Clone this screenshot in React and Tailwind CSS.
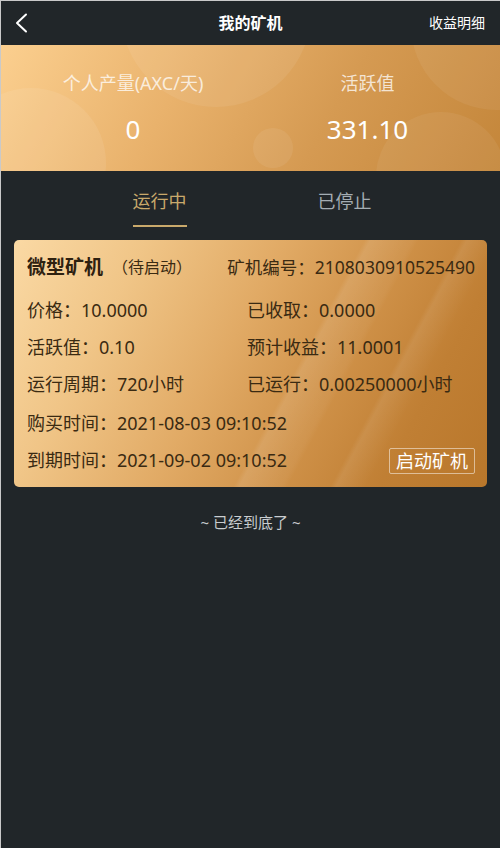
import React from "react";

const font = { fontFamily: '"Noto Sans", "Noto Sans CJK SC", sans-serif' };

function Row({ label, value }) {
  return (
    <div className="flex items-center whitespace-nowrap">
      <span>{label}：</span>
      <span>{value}</span>
    </div>
  );
}

export default function App() {
  return (
    <div
      className="w-[500px] h-[848px] bg-[#212629] border-t border-l border-[#c9c9c9] overflow-hidden flex flex-col"
      style={font}
    >
      {/* Header */}
      <div className="h-[44px] shrink-0 flex items-center justify-between px-[14px] relative">
        <svg width="14" height="20" viewBox="0 0 14 20" className="mt-[-1px]">
          <polyline points="11,1.5 2,10 11,18.5" fill="none" stroke="#ffffff" strokeWidth="2" strokeLinecap="round" strokeLinejoin="round" />
        </svg>
        <div className="absolute left-0 right-0 text-center text-white font-bold text-[16px] pointer-events-none mt-[-1px]">
          我的矿机
        </div>
        <div className="text-white text-[14px] mr-[1px] mt-[-2px]">收益明细</div>
      </div>

      {/* Banner */}
      <div className="relative h-[126px] shrink-0 overflow-hidden bg-[linear-gradient(120deg,#fbcf8f_0%,#e9b26c_35%,#d59a52_65%,#c4863a_100%)]">
        <svg className="absolute inset-0" width="500" height="126" viewBox="0 0 500 126">
          <circle cx="215" cy="-33" r="95" fill="#ffffff" fillOpacity="0.07" />
          <circle cx="30" cy="118" r="75" fill="#ffffff" fillOpacity="0.08" />
          <circle cx="272" cy="103" r="20" fill="#ffffff" fillOpacity="0.07" />
          <circle cx="495" cy="-20" r="85" fill="#ffffff" fillOpacity="0.06" />
          <circle cx="440" cy="132" r="65" fill="#ffffff" fillOpacity="0.06" />
        </svg>
        <div className="relative grid grid-cols-[264px_1fr] h-full">
          <div className="flex flex-col items-center">
            <div className="mt-[26px] text-[18px] text-white/75 leading-[24px]">个人产量(AXC/天)</div>
            <div className="mt-[16px] text-[26px] text-white leading-[36px]">0</div>
          </div>
          <div className="flex flex-col items-center pr-[30px]">
            <div className="mt-[26px] text-[18px] text-white/75 leading-[24px]">活跃值</div>
            <div className="mt-[16px] text-[26px] text-white leading-[36px]">331.10</div>
          </div>
        </div>
      </div>

      {/* Tabs */}
      <div className="w-[370px] ml-[66px] grid grid-cols-2 h-[57px] shrink-0">
        <div className="flex flex-col items-center justify-end">
          <div className="text-[18px] text-[#c9a96b] leading-[24px]">运行中</div>
          <div className="mt-[12px] mb-[1px] w-[54px] h-[2px] bg-[#c9a96b]" />
        </div>
        <div className="flex flex-col items-center justify-end">
          <div className="text-[18px] text-[#a4adb3] leading-[24px]">已停止</div>
          <div className="mt-[12px] mb-[1px] h-[2px]" />
        </div>
      </div>

      {/* Card */}
      <div className="mx-[13px] mt-[12px] rounded-[5px] overflow-hidden relative bg-[linear-gradient(118deg,#fad9a4_0%,#f0c587_22%,#e1aa65_45%,#cf9148_65%,#c07f34_82%,#b9772b_100%)] text-[#3a2a12] text-[18px]">
        <div className="absolute inset-0 bg-[linear-gradient(118deg,transparent_0%,transparent_58%,rgba(255,255,255,0.10)_59%,rgba(255,255,255,0.04)_66%,transparent_67%,transparent_74%,rgba(255,255,255,0.08)_75%,transparent_80%,transparent_100%)]" />
        <div className="relative pt-[12px] pb-[8px] pl-[13px] pr-[13px]">
          <div className="h-[30px] flex items-center justify-between whitespace-nowrap">
            <div className="flex items-center">
              <span className="text-[19px] font-bold text-[#2e2110]">微型矿机</span>
              <span className="ml-[9px] text-[16px] text-[#3a2a12]">（待启动）</span>
            </div>
            <div className="text-[17.5px] mr-[-1px]">矿机编号：2108030910525490</div>
          </div>
          <div className="mt-[10px] grid grid-cols-[220px_1fr] grid-rows-[37px_37px_37px]">
            <Row label="价格" value="10.0000" />
            <Row label="已收取" value="0.0000" />
            <Row label="活跃值" value="0.10" />
            <Row label="预计收益" value="11.0001" />
            <Row label="运行周期" value="720小时" />
            <Row label="已运行" value="0.00250000小时" />
          </div>
          <div className="mt-[2px] h-[37px] flex items-center">
            <Row label="购买时间" value="2021-08-03 09:10:52" />
          </div>
          <div className="h-[37px] flex items-center justify-between">
            <Row label="到期时间" value="2021-09-02 09:10:52" />
            <div className="h-[26px] px-[6px] flex items-center border border-white/50 rounded-[2px] text-white text-[18px] leading-none mr-[-1px]">
              启动矿机
            </div>
          </div>
        </div>
      </div>

      <div className="mt-[24px] text-center text-[15px] text-[#c9cdd0]">~ 已经到底了 ~</div>
    </div>
  );
}
